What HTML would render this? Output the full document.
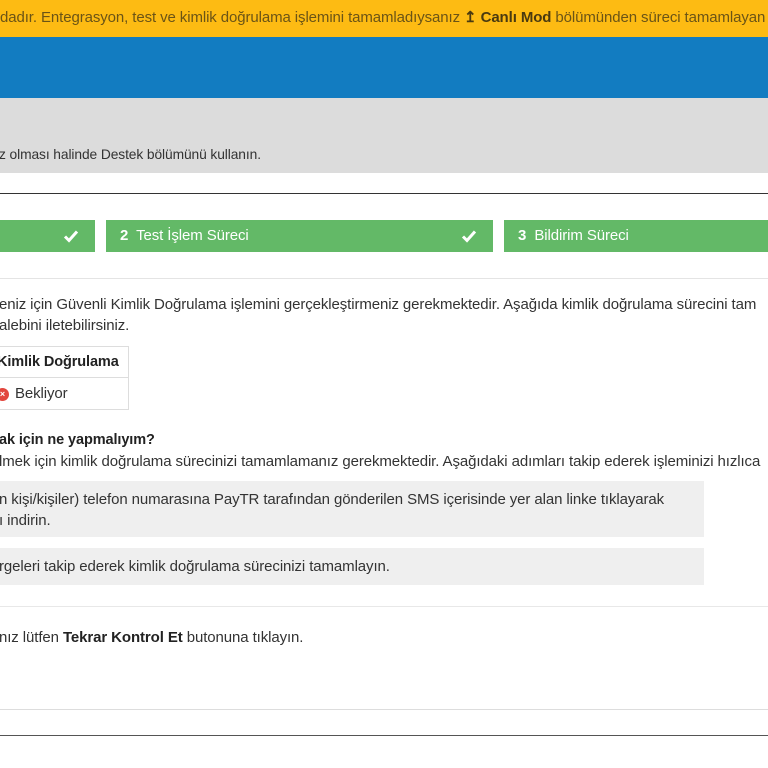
<!DOCTYPE html>
<html><head><meta charset="utf-8"><style>
html,body{margin:0;padding:0;width:768px;height:768px;overflow:hidden;background:#fff;font-family:"Liberation Sans",sans-serif;color:#333;}
.a{position:absolute;white-space:nowrap;}
.t{font-size:15px;letter-spacing:-0.1px;}
b{font-weight:bold;color:#222}
</style></head><body>
<div class="a" style="left:0;top:0;width:768px;height:37px;background:#fdbb13;"></div>
<div class="a t" style="left:0;top:8px;font-size:15px;color:#6b5416;width:768px;overflow:hidden;">dadır. Entegrasyon, test ve kimlik doğrulama işlemini tamamladıysanız <b style="color:#4a3a10">↥ Canlı Mod</b> bölümünden süreci tamamlayan</div>
<div class="a" style="left:0;top:37px;width:768px;height:61px;background:#127cc1;"></div>
<div class="a" style="left:0;top:98px;width:768px;height:75px;background:#dcdcdc;"></div>
<div class="a" style="left:-1px;top:147px;font-size:13.8px;letter-spacing:-0.1px;color:#333;">z olması halinde Destek bölümünü kullanın.</div>
<div class="a" style="left:0;top:193px;width:768px;height:1px;background:#333;"></div>
<div class="a" style="left:0;top:220px;width:95px;height:32px;background:#63b967;"></div>
<div class="a" style="left:106px;top:220px;width:387px;height:32px;background:#63b967;"></div>
<div class="a" style="left:504px;top:220px;width:264px;height:32px;background:#63b967;"></div>
<svg class="a" style="left:63px;top:229px" width="16" height="14" viewBox="0 0 16 14"><path d="M2 7.5 L6 11.5 L14 2.5" stroke="#fff" stroke-width="3" fill="none"/></svg>
<svg class="a" style="left:461px;top:229px" width="16" height="14" viewBox="0 0 16 14"><path d="M2 7.5 L6 11.5 L14 2.5" stroke="#fff" stroke-width="3" fill="none"/></svg>
<div class="a t" style="left:120px;top:227px;color:#fff;"><b style="color:#fff">2</b>&nbsp; Test İşlem Süreci</div>
<div class="a t" style="left:518px;top:227px;color:#fff;"><b style="color:#fff">3</b>&nbsp; Bildirim Süreci</div>
<div class="a" style="left:0;top:278px;width:768px;height:1px;background:#e4e4e4;"></div>
<div class="a t" style="left:-1px;top:296px;width:769px;overflow:hidden;">eniz için Güvenli Kimlik Doğrulama işlemini gerçekleştirmeniz gerekmektedir. Aşağıda kimlik doğrulama sürecini tam</div>
<div class="a t" style="left:-1px;top:317px;">alebini iletebilirsiniz.</div>
<div class="a" style="left:-2px;top:346px;width:129px;height:62px;border:1px solid #ddd;"></div>
<div class="a" style="left:0;top:377px;width:128px;height:1px;background:#ddd;"></div>
<div class="a t" style="left:-3px;top:354px;font-weight:bold;color:#222;font-size:14.5px;">Kimlik Doğrulama</div>
<div class="a" style="left:-4px;top:388px;width:13px;height:13px;border-radius:50%;background:#e2463d;color:#fff;font-size:9px;line-height:13px;text-align:center;font-weight:bold;">×</div>
<div class="a t" style="left:15px;top:385px;">Bekliyor</div>
<div class="a t" style="left:-1px;top:432px;font-weight:bold;color:#222;font-size:14.5px;">ak için ne yapmalıyım?</div>
<div class="a t" style="left:-1px;top:453px;width:769px;overflow:hidden;">lmek için kimlik doğrulama sürecinizi tamamlamanız gerekmektedir. Aşağıdaki adımları takip ederek işleminizi hızlıca</div>
<div class="a" style="left:0;top:481px;width:704px;height:56px;background:#efefef;"></div>
<div class="a t" style="left:-1px;top:491px;">n kişi/kişiler) telefon numarasına PayTR tarafından gönderilen SMS içerisinde yer alan linke tıklayarak</div>
<div class="a t" style="left:-1px;top:512px;">ı indirin.</div>
<div class="a" style="left:0;top:548px;width:704px;height:37px;background:#efefef;"></div>
<div class="a t" style="left:-1px;top:558px;">rgeleri takip ederek kimlik doğrulama sürecinizi tamamlayın.</div>
<div class="a" style="left:0;top:606px;width:768px;height:1px;background:#e8e8e8;"></div>
<div class="a t" style="left:-1px;top:629px;">nız lütfen <b>Tekrar Kontrol Et</b> butonuna tıklayın.</div>
<div class="a" style="left:0;top:709px;width:768px;height:1px;background:#ddd;"></div>
<div class="a" style="left:0;top:735px;width:768px;height:1px;background:#555;"></div>
</body></html>
